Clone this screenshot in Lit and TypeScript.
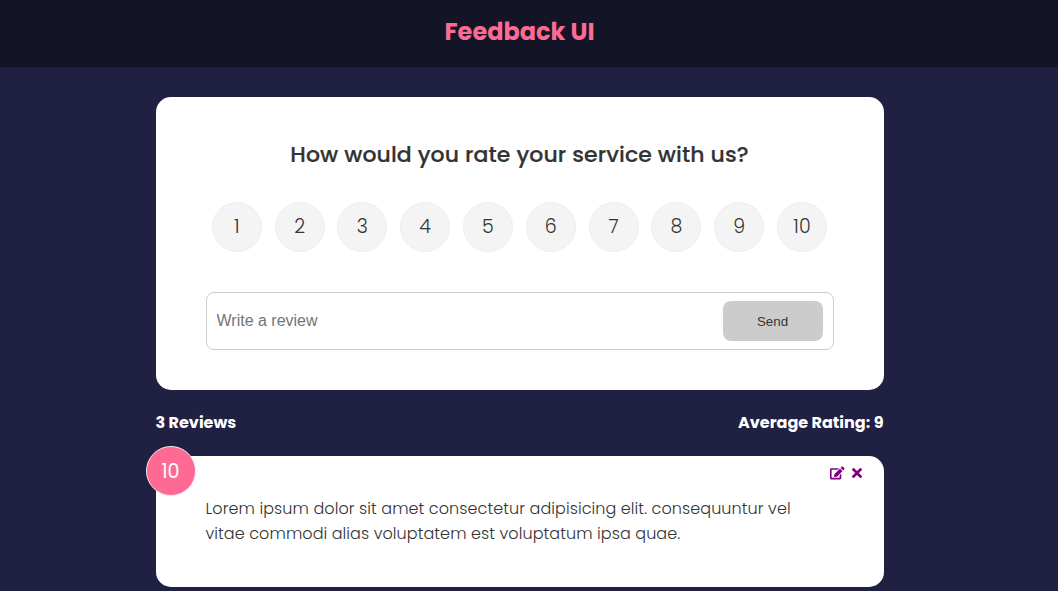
import { LitElement, html, css } from "lit";
import { customElement, state } from "lit/decorators.js";

@customElement("app-root")
export class AppRoot extends LitElement {
  @state() private reviews = [
    {
      rating: 10,
      text: "Lorem ipsum dolor sit amet consectetur adipisicing elit. consequuntur vel vitae commodi alias voluptatem est voluptatum ipsa quae.",
    },
  ];

  static styles = css`
    * { box-sizing: border-box; }
    :host {
      display: block;
      height: 591px;
      overflow: hidden;
      background: #202142;
      color: #333;
      font: 300 16px/25.6px Poppins, "Open Sans", sans-serif;
    }
    svg { display: block; }
    h1, h2, p { margin: 0; }
    header {
      height: 67px;
      padding: 13px 19px 0 0;
      background: #131426;
      color: #ff6a95;
      text-align: center;
    }
    h1 { font-size: 24px; line-height: 38.4px; font-weight: 700; }
    main { width: 728px; margin: 30px 0 0 155.5px; }
    .card { background: #fff; border-radius: 15px; }
    .form { height: 293px; padding: 40px 50px; }
    h2 {
      height: 36px;
      font-size: 22px;
      line-height: 35.2px;
      font-weight: 500;
      letter-spacing: 0.11px;
      text-align: center;
      -webkit-text-stroke: 0.2px #333;
    }
    .ratings {
      display: flex;
      justify-content: space-between;
      margin: 29px 6.5px 40px 6.3px;
    }
    .rating, .badge {
      width: 50px;
      height: 50px;
      border-radius: 50%;
      border: 1px solid #eee;
      background: #f4f4f4;
      font-size: 19px;
      line-height: 48px;
      text-align: center;
    }
    .field {
      height: 58px;
      display: flex;
      align-items: center;
      border: 1px solid #ccc;
      border-radius: 8px;
      padding: 8px 10px;
    }
    .input {
      flex: 1;
      min-width: 0;
      border: 0;
      outline: 0;
      padding: 0;
      font: 16px "Liberation Sans", Arial, sans-serif;
    }
    .input::placeholder { color: #757575; opacity: 1; }
    .send {
      width: 100px;
      height: 40px;
      border: 0;
      border-radius: 8px;
      padding: 0;
      background: #ccc;
      color: #333;
      font: 13.333px "Liberation Sans", Arial, sans-serif;
    }
    .stats {
      display: flex;
      justify-content: space-between;
      height: 26px;
      margin: 20px 0;
      color: #fff;
      font-weight: 700;
    }
    .review { position: relative; height: 131px; padding: 40px 50px; }
    .review p {
      padding-right: 20px;
      line-height: 25px;
      letter-spacing: 0.078px;
    }
    .badge {
      position: absolute;
      top: -10px;
      left: -10px;
      background: #ff6a95;
      color: #fff;
      font-weight: 400;
      line-height: 49px;
    }
    .actions {
      position: absolute;
      top: 8.5px;
      right: 21.5px;
      display: flex;
      align-items: center;
      gap: 7.5px;
      color: purple;
    }
  `;

  render() {
    return html`
      <header><h1>Feedback UI</h1></header>
      <main>
        <section class="card form">
          <h2>How would you rate your service with us?</h2>
          <div class="ratings">
            ${Array.from({ length: 10 }, (_, i) => html`<div class="rating">${i + 1}</div>`)}
          </div>
          <div class="field">
            <input class="input" placeholder="Write a review" />
            <button class="send">Send</button>
          </div>
        </section>
        <div class="stats">
          <span>3 Reviews</span>
          <span>Average Rating: 9</span>
        </div>
        ${this.reviews.map((r) => html`
          <article class="card review">
            <div class="badge">${r.rating}</div>
            <div class="actions">
              <svg width="14.5" height="16" viewBox="0 0 576 512" fill="currentColor"><path d="M402.6 83.2l90.2 90.2c3.800 3.800 3.800 10 0 13.800L274.400 405.600l-92.800 10.300c-12.400 1.400-22.900-9.100-21.500-21.500l10.300-92.800L388.800 83.200c3.800-3.800 10-3.800 13.800 0zm162-22.900l-48.800-48.800c-15.200-15.200-39.900-15.200-55.200 0l-35.400 35.400c-3.800 3.800-3.800 10 0 13.800l90.200 90.200c3.800 3.800 10 3.800 13.800 0l35.400-35.400c15.200-15.300 15.200-40 0-55.200zM384 346.200V448H64V128h229.800c3.200 0 6.200-1.300 8.500-3.500l40-40c7.600-7.600 2.200-20.500-8.500-20.500H48C21.500 64 0 85.500 0 112v352c0 26.500 21.500 48 48 48h352c26.500 0 48-21.500 48-48V306.200c0-10.700-12.900-16-20.500-8.500l-40 40c-2.200 2.300-3.500 5.300-3.500 8.500z"/></svg>
              <svg width="10" height="16" viewBox="0 0 352 512" fill="currentColor"><path d="M242.720 256l100.070-100.070c12.280-12.280 12.280-32.190 0-44.480l-22.240-22.240c-12.280-12.280-32.190-12.280-44.480 0L176 189.280 75.930 89.210c-12.280-12.280-32.190-12.280-44.480 0L9.210 111.450c-12.280 12.280-12.280 32.190 0 44.480L109.280 256 9.210 356.070c-12.280 12.280-12.280 32.190 0 44.480l22.240 22.240c12.280 12.280 32.200 12.280 44.480 0L176 322.720l100.070 100.070c12.280 12.280 32.200 12.280 44.480 0l22.240-22.240c12.280-12.280 12.280-32.190 0-44.480L242.720 256z"/></svg>
            </div>
            <p>${r.text}</p>
          </article>`)}
      </main>
    `;
  }
}
